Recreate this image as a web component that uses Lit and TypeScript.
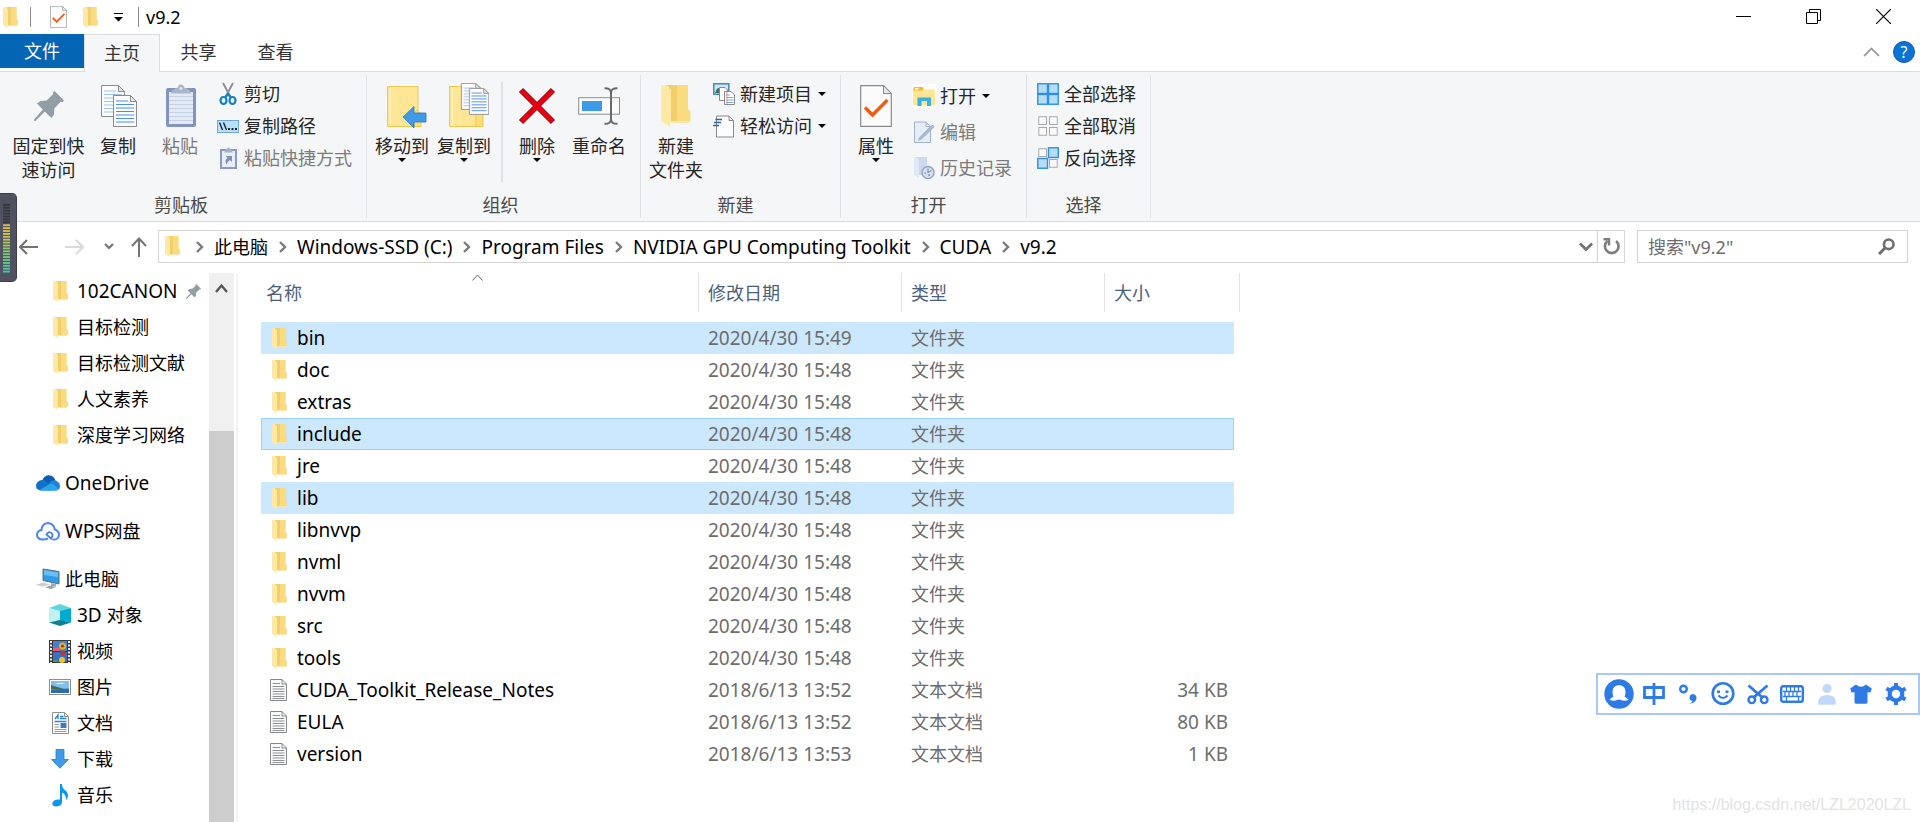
import { LitElement, html, svg, css, nothing } from "lit";
import { customElement, state } from "lit/decorators.js";
import { classMap } from "lit/directives/class-map.js";

const draw = (w: number, h: number, body: unknown, vb = `0 0 ${w} ${h}`) =>
  html`<svg width=${w} height=${h} viewBox=${vb} fill="none" aria-hidden="true">${body}</svg>`;

const folderShape = svg`
  <path d="M2 0H13.4V12.2L14.6 13V18H4V1Z" fill="#f3cf6c"/>
  <path d="M8 0H13.4V12.2L14.6 13V18H8Z" fill="#fadb7f"/>
  <path d="M5 18H14.6L14 19H5Z" fill="#f7e6b4"/>
  <path d="M0 0.2L2 0L5 2.4V17.5L4.4 21L0 18Z" fill="#ffe8a2"/>`;
const folder = () => draw(15, 21, folderShape);
const folderLarge = () => draw(30, 42, folderShape, "0 0 15 21");

const textDoc = () => draw(18, 22, svg`
  <path d="M.5 .5H12L16.5 5V21.5H.5Z" fill="#fbfbfb" stroke="#85888b"/>
  <path d="M12 .5V5H16.5" stroke="#85888b"/>
  <path d="M2.5 4.5H10M2.5 7.5H14.5M2.5 10H14.5M2.5 12.5H14.5M2.5 15H14.5M2.5 17.5H14.5M2.5 19.5H14.5" stroke="#8f9295"/>`);

const checkDoc = (w: number, h: number) => draw(w, h, svg`
  <path d="M.7 .7H23.5L31.3 8.5V41.3H.7Z" fill="#fbfbfb" stroke="#8a8a8a" stroke-width="1.2"/>
  <path d="M23.5 .7V8.5H31.3Z" fill="#e4e7ea" stroke="#8a8a8a" stroke-width="1"/>
  <path d="M5 22.5L12.5 30L27.5 15" stroke="#f35b14" stroke-width="3.4"/>`, "0 0 32 42");

const pin = (s: number) => draw(s, s, svg`
  <path d="M20.5 0L30 9.5L28.5 11.2L26.6 10.8L20.3 17.4L20 23.5L17.4 27L10.8 20.4L1.4 30L0 29.8V28.6L8.9 18.5L3 12.6L6.6 10L12.6 9.6L19 3.3L18.8 1.6Z" fill="#929da4"/>`, "0 0 30 30");

const sheet = (x: number, y: number, line: string) => svg`
  <path d=${`M${x + .5} ${y + .5}h17l6 6v25h-23z`} fill="#fcfcfd" stroke="#8b8b8b"/>
  <path d=${`M${x + 17.5} ${y + .5}v6h6z`} fill="#e3e5e8" stroke="#8b8b8b"/>
  <path d=${`M${x + 3} ${y + 6}h12M${x + 3} ${y + 9.5}h18M${x + 3} ${y + 13}h18M${x + 3} ${y + 16.5}h18M${x + 3} ${y + 20}h18M${x + 3} ${y + 23.5}h18M${x + 3} ${y + 27}h18`} stroke=${line}/>`;
const copyIcon = () => draw(39, 44, svg`${sheet(1, 1, "#9fc2f5")}${sheet(13, 11, "#4d8df0")}`, "-1 0 39 44");
const paste = () => draw(34, 44, svg`
  <rect x="1" y="4" width="30" height="39" rx="2" fill="#8293bd"/>
  <rect x="4" y="8" width="24" height="32" fill="#e3eaf6"/>
  <path d="M4 12.5H28M4 16.5H28M4 20.5H28M4 24.5H28M4 28.5H28M4 32.5H28M4 36.5H28" stroke="#c6d1e4"/>
  <path d="M6 9.5Q7 4.5 12.5 4Q13 .5 16 .5T19.5 4Q25 4.5 26 9.5Z" fill="#a9b5cd"/>
  <circle cx="16" cy="4.5" r="1.5" fill="#dde4f0"/>`, "-2 0 34 44");
const cut = () => draw(18, 24, svg`
  <path d="M4 1L11.5 15M14 1L6.5 15" stroke="#8a8d91" stroke-width="1.8"/>
  <path d="M6.5 15L9 12L11.5 15" stroke="#1480c4" stroke-width="2.4"/>
  <ellipse cx="4.5" cy="18.5" rx="3" ry="3.5" stroke="#1480c4" stroke-width="2.2"/>
  <ellipse cx="13.5" cy="18.5" rx="3" ry="3.5" stroke="#1480c4" stroke-width="2.2"/>`);
const copyPath = () => draw(22, 13, svg`
  <rect x=".5" y=".5" width="21" height="12" fill="#b9e0fb" stroke="#6fa9d6"/>
  <path d="M2.5 2.5L5.5 10M6.5 2.5L9.5 10" stroke="#1b2733" stroke-width="1.4"/>
  <path d="M11 9H13M14.5 9H16.5M18 9H20" stroke="#1b2733" stroke-width="1.8"/>`);
const pasteShortcut = () => draw(17, 22, svg`
  <rect x="1" y="3" width="15" height="18" fill="#e9eef8" stroke="#8b9bc0" stroke-width="2"/>
  <path d="M4 5.5L6.5 2Q8.5 -1 10.5 2L13 5.5Z" fill="#a5b1ca"/>
  <path d="M5.5 9H12V15L10 13Q7.5 14 6.5 17.5Q4 13.5 7.5 11Z" fill="#7f90b8"/>`);
const bigFolder = svg`
  <path d="M1.5 3.5H32V43.5H1.5Z" fill="#ffe596" stroke="#efc84e"/>
  <path d="M28 43.5V30L31 27L35 31V43.5Z" fill="#ffdd77" stroke="#efc84e"/>
  <path d="M4.5 5V41" stroke="#fff3c6"/>`;
const moveTo = () => draw(49, 46, svg`${bigFolder}
  <path d="M17 34L28 23.5V30H40V39H28V45Z" fill="#3f9be8" stroke="#2d77ba" stroke-width=".8"/>`, "-8 0 49 46");
const copyTo = () => draw(49, 46, svg`${bigFolder}
  <g transform="translate(13 0) scale(.84)">${sheet(0, 0, "#9fc2f5")}</g>
  <g transform="translate(21 5) scale(.84)">${sheet(0, 0, "#3c82f0")}</g>`, "-8 0 49 46");
const deleteIcon = () => draw(38, 38, svg`
  <path d="M3 3L35 35M35 3L3 35" stroke="#8e1216" stroke-width="6"/>
  <path d="M3.5 3.5L34.5 34.5M34.5 3.5L3.5 34.5" stroke="#e60012" stroke-width="4.4"/>`);
const rename = () => draw(42, 38, svg`
  <rect x=".7" y="10.7" width="40.8" height="16.5" fill="#fbfbfb" stroke="#8d8d8d"/>
  <rect x="4" y="14" width="20" height="10" fill="#3c9ae8"/>
  <path d="M33 5V33M26.500 1.2Q33 1 33 6Q33 1 39.5 1.2M26.5 36.8Q33 37 33 32Q33 37 39.5 36.8" stroke="#6b6b6b" stroke-width="2"/>`);
const newItem = () => draw(22, 22, svg`
  <rect x=".8" y=".8" width="15" height="10.5" fill="#cbe8fa" stroke="#4b87ab" stroke-width="1.5"/>
  <path d="M2 10Q5 2 7.5 7L9 10Z" fill="#3e6f5e"/>
  <path d="M6.5 4.5H12L14.5 7V17.5H6.5Z" fill="#fff" stroke="#8a8a8a"/>
  <path d="M11.5 8.5H18L21.5 12V21.5H11.5Z" fill="#fff" stroke="#8a8a8a"/>
  <path d="M13 12H17M13 14.5H20.5M13 17H20.5M13 19.5H20.5" stroke="#7da9de"/>
  <path d="M14 9V21" stroke="#ee8f9a"/>`);
const easyAccess = () => draw(22, 23, svg`
  <path d="M3.5 1H16L20.5 5.5V22H3.5Z" fill="#fdfdfd" stroke="#8a8a8a"/>
  <path d="M16 1V5.5H20.5" stroke="#8a8a8a"/>
  <path d="M2.5 4.5H9M1 7.5H8M0 10.5H6" stroke="#33659a" stroke-width="1.4"/>`);
const openIcon = () => draw(24, 24, svg`
  <rect width="24" height="24" fill="#fff"/>
  <path d="M1 4H11L12 5.5H23V21H1Z" fill="#ffe594"/>
  <rect x="1.5" y="3" width="10" height="3.5" rx="1" fill="#f8bd24"/><rect x="3" y="4" width="3.5" height="1.5" fill="#fff"/>
  <path d="M5.5 22V13.5H19V22H15V17H9.5V22Z" fill="#38b0e6"/>`);
const edit = () => draw(22, 22, svg`
  <path d="M1.5 1H13L17.5 5.5V21.5H1.5Z" fill="#e7edf8" stroke="#a3b2d1"/>
  <path d="M13 1V5.5H17.5" stroke="#a3b2d1"/>
  <path d="M5 20L6 16.5L17.5 5L20 3.5L21.5 6L8.5 18.5Z" fill="#a9b7d3"/>`);
const history = () => draw(22, 22, svg`
  <path d="M2 0H14V18H5V2Z" fill="#ccd8eb"/><path d="M1 0L6 3V21L1 18Z" fill="#e0e8f5"/>
  <circle cx="15" cy="15.5" r="6" fill="#d7e0ef" stroke="#94a5c8" stroke-width="1.5"/>
  <path d="M15 11.5V15.5L18.5 13.5M11.5 16H13M17 18H15" stroke="#8598bd" stroke-width="1.3"/>`);
const tiles = (on: boolean[]) => draw(22, 22, svg`${on.map((v, i) => {
  const x = i % 2 ? 11.5 : .75, y = i > 1 ? 11.5 : .75;
  return v
    ? svg`<rect x=${x} y=${y} width="9.75" height="9.75" fill="#b4ddfa" stroke="#2f90e0" stroke-width="1.4"/>`
    : svg`<rect x=${x + 1} y=${y + 1} width="7.75" height="7.75" fill="#fafafa" stroke="#a9a9a9"/>`;
})}`);

const oneDrive = () => draw(24, 16, svg`
  <path d="M6 6Q8 .3 13 .3Q18 .5 19.5 6L12 10Z" fill="#0a5fb4"/>
  <path d="M5 15.5Q0 15 0 10.5Q.5 6 5.5 5Q9 4.5 12 8L14 15.5Z" fill="#1073c9"/>
  <path d="M13 8Q16 4.5 19.5 5.5Q24 7 24 11Q24 15 20 15.5H12Z" fill="#1a84db"/>
  <path d="M3.5 15L14 9Q17 8 22.5 14Q21.5 15.5 19.5 15.6H6Q4.5 15.6 3.5 15Z" fill="#2aa6ec"/>`);
const wps = () => draw(24, 19, svg`
  <path d="M12 16.5Q10 17.5 6 17.5Q1 17 1 12.5Q1.5 8.5 5.5 8Q6 1.5 12 1Q18 1.5 18.8 7.5Q23 9 23 13Q22.5 17.5 18 17.5H16.5" stroke="#4b86f0" stroke-width="2"/>
  <path d="M16 17.5L10.5 12.5Q13 8.5 16 11.5Q17.5 14 15 16" stroke="#4b86f0" stroke-width="1.8"/>`);
const pc = () => draw(24, 22, svg`
  <path d="M7 1L23 3.5V16L7 12.5Z" fill="#2f9be6" stroke="#5d6f7d"/>
  <path d="M8 2L22 4.5V9L8 7Z" fill="#66bff5"/>
  <path d="M15 15V18L20 18.5V16Z" fill="#a5adb3"/>
  <path d="M0 17L7 14.5L14 16.5L7 18.5Z" fill="#c8cdd1"/><path d="M9 19.5L14 17.5L20 19L15 21Z" fill="#9ba2a8"/>`);
const cube = () => draw(22, 22, svg`
  <path d="M0 4L11 0L22 4L11 7.5Z" fill="#5fd5df"/><path d="M0 4L11 7V16.5L0 18.5Z" fill="#c3f1ee"/>
  <path d="M11 7L22 4V18.5L11 16.5Z" fill="#00abd2"/><path d="M0 18.5L11 16L22 18.5L11 22Z" fill="#0b8394"/>`);
const film = () => draw(22, 23, svg`
  <rect width="22" height="23" fill="#3b3b3b"/><rect x="4" y="1" width="14" height="10" fill="#4a7fd6"/><rect x="4" y="12" width="14" height="10" fill="#3c6fc8"/>
  <path d="M2 1V23M20 1V23" stroke="#eee" stroke-width="2" stroke-dasharray="2 1.5"/>
  <circle cx="13.5" cy="6" r="3.5" fill="#e0b326"/><circle cx="13.5" cy="6" r="1.5" fill="#963c1c"/>
  <path d="M4 8H10L11 11H4Z" fill="#e25d79"/><circle cx="14" cy="13" r="2.5" fill="#b93a20"/><circle cx="13" cy="20" r="3" fill="#efc12a"/><path d="M4 21Q7 18 10 22H4Z" fill="#3fa05a"/>`);
const picture = () => draw(22, 16, svg`
  <rect x=".5" y=".5" width="21" height="15" fill="#fff" stroke="#8e8e8e"/><rect x="2" y="2" width="18" height="12" fill="#86bdf0"/>
  <path d="M6 5Q11 2.5 16 5Z" fill="#e5f1fb"/><path d="M2 6Q8 8 15 10H2Z" fill="#3f6e56"/><path d="M2 10.5L20 9.5V14H2Z" fill="#2d6da5"/>`);
const docs = () => draw(17, 22, svg`
  <path d="M.5 .5H12.5L16.5 4.5V21.5H.5Z" fill="#fdfdfd" stroke="#8e8e8e"/><path d="M12.5 .5V4.5H16.5" stroke="#8e8e8e"/>
  <path d="M3 7L6 3V7M8 4.5H11.5M8 6.5H14.5M2.5 9.5H14.5" stroke="#2b87cc" stroke-width="1.3"/>
  <path d="M2.5 12.5H7M2.5 15H7M2.5 17.5H14.5M2.5 19.5H14.5" stroke="#9a9a9a"/><rect x="8.5" y="11" width="6" height="5" fill="#3c7db8"/>`);
const download = () => draw(18, 20, svg`<path d="M5 .5H13V10.5H17.5L9 19.3L.5 10.5H5Z" fill="#3f9be8" stroke="#2a78bf" stroke-width=".8"/>`);
const music = () => draw(17, 23, svg`
  <path d="M8 0H10Q10 4 13.5 6.5Q17 9.5 15.5 14L14 16Q14.5 10.5 10 8.5V18Q10 22 4.5 22.5Q.3 22.3 .3 19.5Q1 15 8 15.5Z" fill="#0a98ee"/>`);

const chevron = (w: number, h: number, d: string, color: string, sw: number) =>
  draw(w, h, svg`<path d=${d} stroke=${color} stroke-width=${sw}/>`);
const crumbChevron = () => chevron(9, 12, "M2 1L7 6L2 11", "#7a7a7a", 2.4);
const downTriangle = () => draw(8, 4, svg`<path d="M0 0H8L4 4Z" fill="#000"/>`);

const BLUE = "#2f7be6";
const ime: [string, unknown][] = [
  ["输入法", draw(30, 30, svg`<circle cx="15" cy="15" r="14.7" fill=${BLUE}/><path d="M15 6Q21.5 6.5 21.5 13Q21.5 16 20.5 17.5L24.5 20.5Q24 22 18.5 21.5L15 20.5L11.5 21.5Q6 22 5.5 20.5L9.5 17.5Q8.5 16 8.5 13Q8.5 6.5 15 6Z" fill="#fff"/>`)],
  ["中文", draw(22, 24, svg`<path d="M1.5 5.5H20.5V15.5H1.5ZM11 1V23" stroke=${BLUE} stroke-width="2.8"/>`)],
  ["标点", draw(20, 22, svg`<circle cx="5.5" cy="6" r="3.3" stroke=${BLUE} stroke-width="2.4"/><path d="M14.5 11Q19 11.5 18.5 15.5Q17.5 20.5 11 20.5Q14 19.5 14.5 18Q11.5 17.5 11.5 14.5Q11.5 11.5 14.5 11Z" fill=${BLUE}/>`)],
  ["表情", draw(24, 26, svg`<circle cx="12" cy="12.5" r="10.3" stroke=${BLUE} stroke-width="2.6"/><path d="M6 9.5H9V12H6ZM14.5 9.5H17.5V12H14.5Z" fill=${BLUE}/><path d="M7.5 14.5Q12 19.5 16.5 14.5" stroke=${BLUE} stroke-width="2"/>`)],
  ["截图", draw(22, 22, svg`<path d="M1.5 2.5L16 15M20.5 2.5L6 15" stroke=${BLUE} stroke-width="2.8"/><circle cx="4.8" cy="16.8" r="3.3" stroke=${BLUE} stroke-width="2.4"/><circle cx="17.2" cy="16.8" r="3.3" stroke=${BLUE} stroke-width="2.4"/>`)],
  ["键盘", draw(24, 18, svg`<rect x="1.2" y="1.2" width="21.6" height="15.6" rx="2" stroke=${BLUE} stroke-width="2.4"/><path d="M3 6.5H21M3 11.5H21M6.5 2V7M10.5 2V7M14.5 2V7M18.5 2V7M5 7V12M9 7V12M13 7V12M17 7V12M6.5 12V16M18.5 12V16" stroke=${BLUE} stroke-width="1.3"/>`)],
  ["用户", draw(18, 22, svg`<circle cx="9" cy="5.5" r="4.6" fill="#c3d8f8"/><path d="M.3 21V18Q1 12 9 12T17.7 18V21Q17.5 21.8 16.5 21.8H1.5Q.5 21.8 .3 21Z" fill="#c3d8f8"/>`)],
  ["皮肤", draw(22, 20, svg`<path d="M6 .5Q11 5 16 .5L21.8 4.5L20.5 8.5L17.5 8.2V18Q17.5 19.8 16 19.8H6Q4.5 19.8 4.5 18V8.2L1.5 8.5L.2 4.5Z" fill=${BLUE}/>`)],
  ["设置", draw(22, 22, svg`<circle cx="11" cy="11" r="6.3" stroke=${BLUE} stroke-width="4.2"/><path d="M11 0V4M11 18V22M1.5 5.5L5 7.5M17 14.5L20.5 16.5M1.5 16.5L5 14.5M17 7.5L20.5 5.5" stroke=${BLUE} stroke-width="4"/>`)],
];

interface FileRow { name: string; date: string; type: string; size?: string }
const dir = (name: string, date = "2020/4/30 15:48"): FileRow => ({ name, date, type: "文件夹" });
const FILES: FileRow[] = [
  dir("bin", "2020/4/30 15:49"), dir("doc"), dir("extras"), dir("include"), dir("jre"), dir("lib"),
  dir("libnvvp"), dir("nvml"), dir("nvvm"), dir("src"), dir("tools"),
  { name: "CUDA_Toolkit_Release_Notes", date: "2018/6/13 13:52", type: "文本文档", size: "34 KB" },
  { name: "EULA", date: "2018/6/13 13:52", type: "文本文档", size: "80 KB" },
  { name: "version", date: "2018/6/13 13:53", type: "文本文档", size: "1 KB" },
];

/* Latin runs are set one pixel larger than the Chinese ones. */
const mixed = (text: string) =>
  text.split(/([\x20-\x7e]+)/).filter(Boolean).map((part) =>
    /^[\x20-\x7e]+$/.test(part) ? html`<span class="latin">${part}</span>` : part);

@customElement("app-root")
export class AppRoot extends LitElement {
  @state() private selected = new Set(["bin", "include", "lib"]);
  @state() private focused = "include";

  static styles = css`
    :host {
      display: flex; flex-direction: column; position: relative; height: 100vh; overflow: hidden;
      background: #fff; color: #000;
      font: 18px/24px "Noto Sans", "Noto Sans CJK SC", sans-serif;
    }
    * { box-sizing: border-box; }
    svg { display: block; flex: none; }
    button { font: inherit; color: inherit; background: none; border: 0; padding: 0; margin: 0; }
    a { color: inherit; text-decoration: none; }
    ul { list-style: none; margin: 0; padding: 0; }
    .latin { font-size: 19px; }

    .titlebar { display: flex; align-items: center; height: 34px; flex: none; padding: 0 2px 0 3px; }
    .titlebar .rule { width: 1px; height: 20px; background: #8a8a8a; }
    .quick { display: flex; align-items: center; gap: 16px; margin: 0 15px 0 19px; }
    .app-icon { margin-right: 12px; }
    .title { margin: 0 0 0 7px; font-size: 18px; line-height: 24px; font-weight: 400; }
    .window { display: flex; margin-left: auto; height: 32px; align-self: flex-start; }
    .window button { width: 70px; display: grid; place-items: center; }

    .tabs { display: flex; height: 38px; flex: none; border-bottom: 1px solid #d9dbdd; color: #333; }
    .tab { width: 77px; height: 38px; padding-bottom: 2px; }
    .tab.file { width: 84px; height: 34px; background: #0365b4; color: #fff; padding: 0; }
    .tab.active { width: 76px; background: #f4f6f8; border: 1px solid #d9dbdd; border-bottom: 0; }
    .tab-tools { display: flex; align-items: center; gap: 13px; margin: 0 5px 2px auto; }
    .help { width: 22px; height: 22px; border-radius: 50%; background: #0a74d6; border: 1px solid #0b5ca8; color: #fff; font-size: 16px; line-height: 20px; }

    .ribbon { display: flex; flex: none; height: 150px; background: #f4f6f8; border-bottom: 1px solid #d9dbdd; color: #262626; }
    .group { margin: 3px 0; padding: 0 14px 0 4px; border-right: 1px solid #dfe1e4; display: flex; flex-direction: column; }
    .group.first { padding-left: 10px; }
    .group.tight { padding-right: 10px; }
    .tools { display: flex; height: 118px; }
    .group h2 { margin: 0; font-size: 18px; line-height: 24px; font-weight: 400; text-align: center; color: #4a4a4a; }
    .big { width: 62px; display: flex; flex-direction: column; align-items: center; padding-top: 8px; white-space: nowrap; }
    .big.wide { width: 77px; }
    .big .pic { height: 46px; margin-bottom: 5px; display: grid; place-items: center; }
    .disabled { color: #7b7b7b; }
    .split { width: 2px; height: 100px; background: #dfe1e4; margin: 7px 3px 0 6px; }
    .stack { padding: 3px 0 0 5px; }
    .small { display: flex; align-items: center; gap: 4px; height: 32px; white-space: nowrap; }
    .small .pic { width: 24px; display: grid; place-items: center; }
    .small .more { margin-left: 2px; }
    .roomy .small { height: 36px; }

    .address { display: flex; align-items: center; flex: none; height: 51px; padding: 0 12px 2px 19px; }
    .nav-button { display: grid; place-items: center; }
    .nav-button.forward { margin-left: 26px; }
    .nav-button.recent { margin-left: 19px; }
    .nav-button.up { margin: 0 11px 0 17px; }
    .path { flex: 1; display: flex; align-items: center; height: 33px; border: 1px solid #d5d5d5; padding-left: 6px; }
    .crumbs { display: flex; align-items: center; white-space: nowrap; }
    .crumbs li { display: flex; align-items: center; line-height: 28px; }
    .crumbs .arrow { width: 29px; display: grid; place-items: center; }
    .crumbs .arrow.lead { width: 34px; padding-left: 4px; }
    .path .history { margin: 0 4px 0 auto; width: 14px; }
    .refresh { width: 27px; height: 31px; border-left: 1px solid #d5d5d5; display: grid; place-items: center; }
    .search { display: flex; align-items: center; width: 271px; height: 33px; margin-left: 12px; border: 1px solid #d5d5d5; padding: 0 12px 0 10px; }
    .search input { flex: 1; min-width: 0; border: 0; outline: 0; padding: 0; font: inherit; background: none; }
    .search input::placeholder { color: #6d6d6d; opacity: 1; }

    .body { display: flex; flex: 1; min-height: 0; }
    .tree { width: 209px; overflow: hidden; flex: none; }
    .tree a { display: flex; align-items: center; gap: 5px; height: 36px; padding-left: 48px; white-space: nowrap; }
    .tree .root { padding-left: 36px; margin-top: 12px; }
    .tree .pic { width: 24px; display: grid; place-items: center; flex: none; }
    .tree .pinned { margin-left: 4px; }
    .scroll { width: 25px; flex: none; background: #f0f0f0; display: flex; flex-direction: column; align-items: center; padding-top: 10px; }
    .thumb { width: 25px; flex: 1; margin-top: 138px; background: #cdcdcd; }
    .divider { width: 2px; margin-left: 2px; background: #f3f3f3; flex: none; }
    .files { padding-left: 23px; }
    table { border-collapse: separate; border-spacing: 0; table-layout: fixed; width: 973px; }
    th, td { padding: 0 6px 0 10px; text-align: left; font-weight: 400; white-space: nowrap; }
    th { position: relative; height: 49px; padding-bottom: 10px; color: #4c607a; }
    th::after { content: ""; position: absolute; right: -1px; top: 0; width: 1px; height: 39px; background: #e2e2e2; }
    th:last-child::after { right: -6px; }
    th:first-child { padding-left: 5px; }
    th .sort { position: absolute; left: 50%; top: 1px; margin-left: -8px; }
    td { height: 32px; color: #6d6d6d; }
    td.name { padding-left: 9px; color: #000; }
    .name-box { display: flex; align-items: center; gap: 9px; }
    .name-box .pic { width: 18px; display: grid; place-items: center; }
    td.size { text-align: right; }
    tr.selected { background: #cce8ff; }
    tr.focused { outline: 1px solid #99d1ff; outline-offset: -1px; }
    .c-name { width: 437px; }
    .c-mid { width: 203px; }

    .meter { position: absolute; left: 0; top: 193px; width: 17px; height: 89px; background: #50535f; border: 1px solid #3c3e48; border-left: 0; border-radius: 0 5px 5px 0; padding: 10px 0 0 3px; }
    .ime { position: absolute; right: 0; top: 673px; width: 324px; height: 42px; border: 2px solid #a9c8f6; background: #fff; display: flex; align-items: center; padding: 0 5px 0 4px; }
    .ime button { flex: 1; display: grid; place-items: center; }
    .watermark { position: absolute; right: 9px; bottom: 5px; font: 16px/24px "Liberation Sans", Arial, sans-serif; color: #e3e3e3; }
  `;

  private pick(name: string) {
    this.selected = new Set([name]);
    this.focused = name;
  }

  private big(icon: unknown, label: unknown, opts: { more?: boolean; wide?: boolean; off?: boolean } = {}) {
    return html`<button class=${classMap({ big: true, wide: !!opts.wide, disabled: !!opts.off })} ?disabled=${opts.off}>
      <span class="pic">${icon}</span><span>${label}</span>${opts.more ? downTriangle() : nothing}</button>`;
  }

  private small(icon: unknown, label: string, opts: { more?: boolean; off?: boolean } = {}) {
    return html`<button class=${classMap({ small: true, disabled: !!opts.off })} ?disabled=${opts.off}>
      <span class="pic">${icon}</span><span>${label}</span>${opts.more ? html`<span class="more">${downTriangle()}</span>` : nothing}</button>`;
  }

  private leaf(icon: unknown, label: string, root = false, pinned = false) {
    return html`<li><a href="#" class=${classMap({ root })}><span class="pic">${icon}</span><span>${mixed(label)}</span>${pinned ? html`<span class="pinned">${pin(15)}</span>` : nothing}</a></li>`;
  }

  private meter() {
    const colors = ["#e0bb4c", "#d9c24c", "#c4c653", "#aac85e", "#92c96c", "#7bcb7e", "#64cb8f", "#52c9a2", "#49c6b4"];
    return draw(7, 70, Array.from({ length: 24 }, (_, i) =>
      svg`<rect y=${i * 2.9} width="7" height="1.8" fill=${i < 7 ? "#343640" : colors[Math.floor((i - 7) / 2)]}/>`));
  }

  render() {
    const crumbs = ["此电脑", "Windows-SSD (C:)", "Program Files", "NVIDIA GPU Computing Toolkit", "CUDA", "v9.2"];
    return html`
      <header class="titlebar">
        <span class="app-icon">${folder()}</span><span class="rule"></span>
        <div class="quick">
          <button aria-label="属性">${checkDoc(17, 22)}</button>
          <button aria-label="新建文件夹">${folder()}</button>
          <button aria-label="自定义快速访问工具栏">${draw(9, 9, svg`<path d="M0 .5H9" stroke="#000"/><path d="M0 4H9L4.5 8.5Z" fill="#000"/>`)}</button>
        </div>
        <span class="rule"></span>
        <h1 class="title">v9.2</h1>
        <div class="window">
          <button aria-label="最小化">${draw(15, 15, svg`<path d="M0 7.5H15" stroke="#000"/>`)}</button>
          <button aria-label="还原">${draw(15, 15, svg`<path d="M.5 3.5H11.5V14.5H.5ZM3.5 3V.5H14.5V11.5H12" stroke="#000"/>`)}</button>
          <button aria-label="关闭">${draw(15, 15, svg`<path d="M0 0L15 15M15 0L0 15" stroke="#000" stroke-width="1.2"/>`)}</button>
        </div>
      </header>

      <nav class="tabs" aria-label="功能区">
        <button class="tab file">文件</button><button class="tab active">主页</button>
        <button class="tab">共享</button><button class="tab">查看</button>
        <div class="tab-tools">
          <button aria-label="最小化功能区">${chevron(17, 10, "M1 9L8.5 1.5L16 9", "#a0a0a0", 1.8)}</button>
          <button class="help" aria-label="帮助">?</button>
        </div>
      </nav>

      <section class="ribbon">
        <div class="group first">
          <div class="tools">
            ${this.big(pin(30), html`固定到快<br />速访问`, { wide: true })}
            ${this.big(copyIcon(), "复制")}
            ${this.big(paste(), "粘贴", { off: true })}
            <div class="stack">
              ${this.small(cut(), "剪切")}${this.small(copyPath(), "复制路径")}${this.small(pasteShortcut(), "粘贴快捷方式", { off: true })}
            </div>
          </div>
          <h2>剪贴板</h2>
        </div>
        <div class="group tight">
          <div class="tools">
            ${this.big(moveTo(), "移动到", { more: true })}${this.big(copyTo(), "复制到", { more: true })}
            <span class="split"></span>
            ${this.big(deleteIcon(), "删除", { more: true })}${this.big(rename(), "重命名")}
          </div>
          <h2>组织</h2>
        </div>
        <div class="group">
          <div class="tools">
            ${this.big(folderLarge(), html`新建<br />文件夹`)}
            <div class="stack">${this.small(newItem(), "新建项目", { more: true })}${this.small(easyAccess(), "轻松访问", { more: true })}</div>
          </div>
          <h2>新建</h2>
        </div>
        <div class="group">
          <div class="tools">
            ${this.big(checkDoc(32, 42), "属性", { more: true })}
            <div class="stack roomy">
              ${this.small(openIcon(), "打开", { more: true })}${this.small(edit(), "编辑", { off: true })}${this.small(history(), "历史记录", { off: true })}
            </div>
          </div>
          <h2>打开</h2>
        </div>
        <div class="group">
          <div class="tools">
            <div class="stack">
              ${this.small(tiles([true, true, true, true]), "全部选择")}
              ${this.small(tiles([false, false, false, false]), "全部取消")}
              ${this.small(tiles([false, true, true, false]), "反向选择")}
            </div>
          </div>
          <h2>选择</h2>
        </div>
      </section>

      <div class="address">
        <button class="nav-button" aria-label="后退">${draw(20, 16, svg`<path d="M1 8H19M8 1L1 8L8 15" stroke="#737373" stroke-width="2.2"/>`)}</button>
        <button class="nav-button forward" aria-label="前进">${draw(20, 16, svg`<path d="M0 8H18M11 1L18 8L11 15" stroke="#dadada" stroke-width="2.2"/>`)}</button>
        <button class="nav-button recent" aria-label="最近浏览的位置">${chevron(10, 7, "M1 1L5 5L9 1", "#737373", 2.2)}</button>
        <button class="nav-button up" aria-label="上移">${draw(16, 20, svg`<path d="M8 20V2M1 9L8 1.5L15 9" stroke="#737373" stroke-width="2"/>`)}</button>
        <div class="path">
          ${folder()}
          <ul class="crumbs">
            ${crumbs.map((c, i) => html`<li><span class=${classMap({ arrow: true, lead: i === 0 })}>${crumbChevron()}</span><a href="#">${mixed(c)}</a></li>`)}
          </ul>
          <button class="history" aria-label="以前的位置">${chevron(14, 10, "M1 1.5L7 7.5L13 1.5", "#737373", 2.8)}</button>
          <button class="refresh" aria-label="刷新">${draw(17, 17, svg`<path d="M4.5 3A6.8 6.8 0 1 0 13 3" stroke="#7d7d7d" stroke-width="2.6"/><path d="M.5 1.2H6V7.5" stroke="#7d7d7d" stroke-width="2.4"/>`)}</button>
        </div>
        <label class="search">
          <input type="search" aria-label="搜索" placeholder='搜索"v9.2"' />
          ${draw(17, 17, svg`<circle cx="10.7" cy="6.3" r="4.8" stroke="#6f6f6f" stroke-width="2.6"/><path d="M7 10L1 16" stroke="#6f6f6f" stroke-width="3"/>`)}
        </label>
      </div>

      <div class="body">
        <nav class="tree" aria-label="导航窗格">
          <ul>
            ${this.leaf(folder(), "102CANON", false, true)}
            ${["目标检测", "目标检测文献", "人文素养", "深度学习网络"].map((n) => this.leaf(folder(), n))}
            ${this.leaf(oneDrive(), "OneDrive", true)}
            ${this.leaf(wps(), "WPS网盘", true)}
            ${this.leaf(pc(), "此电脑", true)}
            ${this.leaf(cube(), "3D 对象")}${this.leaf(film(), "视频")}${this.leaf(picture(), "图片")}
            ${this.leaf(docs(), "文档")}${this.leaf(download(), "下载")}${this.leaf(music(), "音乐")}
          </ul>
        </nav>
        <div class="scroll">
          <button aria-label="向上滚动">${chevron(13, 10, "M1 9L6.5 2.5L12 9", "#555", 2.4)}</button>
          <span class="thumb"></span>
        </div>
        <span class="divider"></span>
        <main class="files">
          <table>
            <colgroup><col class="c-name" /><col class="c-mid" /><col class="c-mid" /><col /></colgroup>
            <thead><tr>
              <th>名称<span class="sort">${chevron(11, 7, "M.5 6.5L5.5 1L10.5 6.5", "#666", 1)}</span></th><th>修改日期</th><th>类型</th><th>大小</th>
            </tr></thead>
            <tbody>
              ${FILES.map((f) => html`<tr class=${classMap({ selected: this.selected.has(f.name), focused: this.focused === f.name })} @click=${() => this.pick(f.name)}>
                <td class="name"><span class="name-box"><span class="pic">${f.size ? textDoc() : folder()}</span><span class="latin">${f.name}</span></span></td>
                <td class="latin">${f.date}</td><td>${f.type}</td><td class="size latin">${f.size ?? nothing}</td>
              </tr>`)}
            </tbody>
          </table>
        </main>
      </div>

      <aside class="meter" aria-hidden="true">${this.meter()}</aside>
      <div class="ime" role="toolbar" aria-label="输入法">
        ${ime.map(([label, icon]) => html`<button aria-label=${label}>${icon}</button>`)}
      </div>
      <span class="watermark">https://blog.csdn.net/LZL2020LZL</span>
    `;
  }
}
